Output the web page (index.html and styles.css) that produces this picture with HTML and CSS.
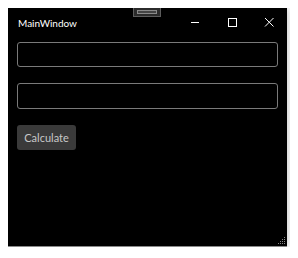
FILE: index.html
```html
<!DOCTYPE html>
<html lang="en">
<head>
    <meta charset="UTF-8">
    <title>MainWindow</title>
    <link rel="stylesheet" href="styles.css">
</head>
<body>

<div class="window">
    <!-- Title Bar -->
    <div class="title-bar">
        <span class="title">MainWindow</span>
        <div class="caption-buttons">
            <button class="caption">
                <svg width="10" height="10" viewBox="0 0 10 10"><path d="M1 5.5h8" stroke="#fff" stroke-width="1"/></svg>
            </button>
            <button class="caption">
                <svg width="10" height="10" viewBox="0 0 10 10"><rect x="1.5" y="1.5" width="8" height="8" fill="none" stroke="#fff" stroke-width="1"/></svg>
            </button>
            <button class="caption">
                <svg width="10" height="10" viewBox="0 0 10 10"><path d="M1 1l8.5 8.5M9.5 1L1 9.5" stroke="#fff" stroke-width="1"/></svg>
            </button>
        </div>
    </div>

    <!-- Debug toolbar handle -->
    <div class="handle"><div class="handle-bar"></div></div>

    <!-- Content -->
    <div class="content">
        <input type="text" class="text-box">
        <input type="text" class="text-box tall">
        <button class="calc">Calculate</button>
    </div>

    <!-- Resize grip -->
    <svg class="grip" width="10" height="10" viewBox="0 0 10 10">
        <rect x="8" y="2" width="1" height="1" fill="#888"/>
        <rect x="6" y="4" width="1" height="1" fill="#888"/>
        <rect x="8" y="4" width="1" height="1" fill="#888"/>
        <rect x="4" y="6" width="1" height="1" fill="#888"/>
        <rect x="6" y="6" width="1" height="1" fill="#888"/>
        <rect x="8" y="6" width="1" height="1" fill="#888"/>
        <rect x="2" y="8" width="1" height="1" fill="#888"/>
        <rect x="4" y="8" width="1" height="1" fill="#888"/>
        <rect x="6" y="8" width="1" height="1" fill="#888"/>
        <rect x="8" y="8" width="1" height="1" fill="#888"/>
    </svg>
</div>

</body>
</html>
```

FILE: styles.css
```css
body {
    font-family: 'Lato', 'Noto Sans', sans-serif;
    background-color: #fff;
    margin: 8px;
}

.window {
    position: relative;
    width: 279px;
    height: 239px;
    background: #000;
    border-bottom: 1px solid #8a8a8a;
    box-shadow: 0 0 9px rgba(0, 0, 0, 0.28);
    box-sizing: border-box;
    display: flex;
    flex-direction: column;
}

.title-bar {
    display: flex;
    justify-content: space-between;
    align-items: center;
    height: 28px;
    padding-left: 10px;
}

.title {
    color: #fff;
    font-size: 10px;
    padding-top: 1px;
}

.caption-buttons {
    display: flex;
    height: 100%;
}

.caption {
    width: 37px;
    height: 100%;
    background: none;
    border: none;
    padding: 0;
    display: flex;
    justify-content: center;
    align-items: center;
}

.handle {
    position: absolute;
    top: -1px;
    left: 125px;
    width: 28px;
    height: 10px;
    background: #2b2b2b;
    border: 1px solid #5c5c5c;
    box-sizing: border-box;
    display: flex;
    justify-content: center;
    align-items: center;
}

.handle-bar {
    width: 18px;
    height: 2px;
    border: 1px solid #8a8a8a;
    background: #444;
}

.content {
    display: flex;
    flex-direction: column;
    align-items: flex-start;
    padding: 6px 9px 0 9px;
}

.text-box {
    width: 100%;
    height: 25px;
    box-sizing: border-box;
    background: #000;
    border: 1px solid #7a7a7a;
    border-radius: 3px;
    margin: 0 0 16px 0;
    outline: none;
}

.text-box.tall {
    height: 26px;
}

.calc {
    width: 59px;
    height: 25px;
    background: #3a3a3a;
    color: #c8c8c8;
    border: none;
    border-radius: 3px;
    font-family: 'Lato', 'Noto Sans', sans-serif;
    font-size: 11px;
    padding: 0;
}

.grip {
    position: absolute;
    right: 1px;
    bottom: 1px;
}
```
